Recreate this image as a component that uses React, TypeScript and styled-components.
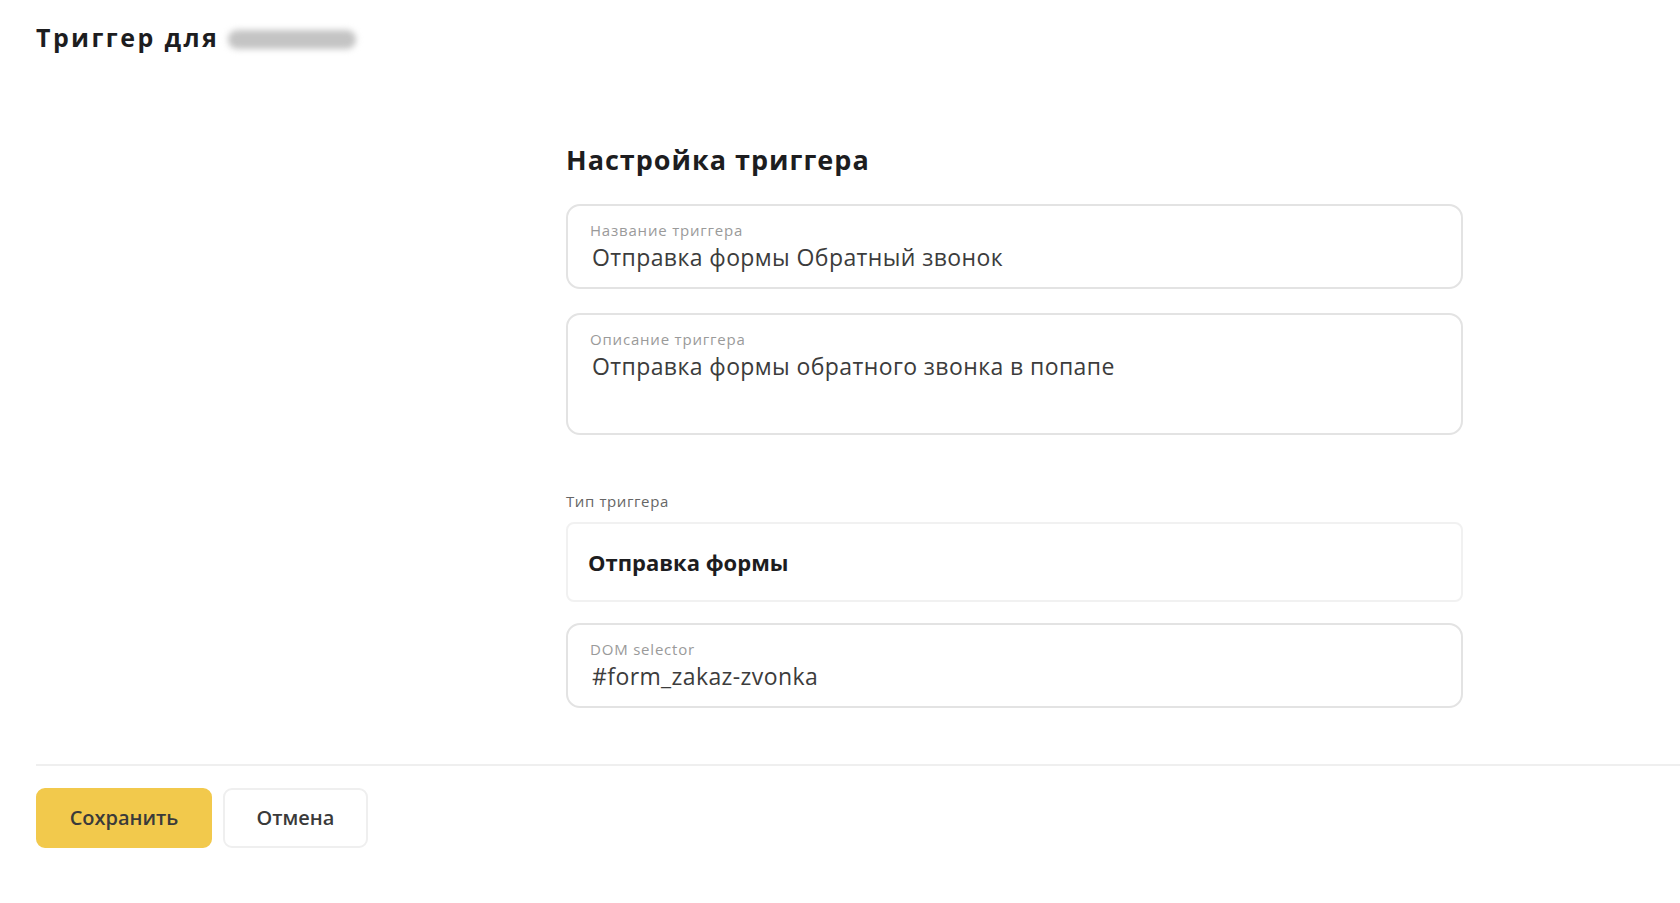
import React from 'react';
import styled, { createGlobalStyle } from 'styled-components';

const GlobalStyle = createGlobalStyle`
  html, body {
    margin: 0;
    padding: 0;
    background: #fff;
  }
  body {
    font-family: "Open Sans", "Noto Sans", Arial, sans-serif;
    color: #222;
  }
`;

const Page = styled.div`
  padding-left: 36px;
  min-height: 903px;
  box-sizing: border-box;
`;

const Header = styled.header`
  display: flex;
  align-items: center;
  gap: 9px;
  padding-top: 19px;
  height: 36px;
`;

const PageTitle = styled.h1`
  margin: 0;
  font-size: 25px;
  font-weight: 700;
  letter-spacing: 2.4px;
  color: #1d1d1f;
  line-height: 36px;
`;

// name of the site, kept hidden behind a blur
const HiddenName = styled.span`
  display: inline-block;
  width: 128px;
  height: 19px;
  margin-top: 4px;
  border-radius: 9px;
  background: #c4c4c4;
  filter: blur(3px);
`;

const Form = styled.section`
  margin-left: 530px;
  width: 897px;
  padding-top: 87px;
`;

const SectionTitle = styled.h2`
  margin: 0 0 26px;
  font-size: 27px;
  font-weight: 700;
  letter-spacing: 1px;
  color: #1d1d1f;
  line-height: 36px;
`;

const FieldBox = styled.div<{ $tall?: boolean }>`
  box-sizing: border-box;
  height: ${({ $tall }) => ($tall ? '122px' : '85px')};
  border: 2px solid #e3e3e3;
  border-radius: 14px;
  padding: 14px 22px 0;
  margin-bottom: 24px;
  background: #fff;
`;

const FieldLabel = styled.div`
  font-size: 15px;
  line-height: 20px;
  letter-spacing: 0.8px;
  color: #9a9a9a;
`;

const FieldValue = styled.div`
  font-size: 23px;
  line-height: 30px;
  letter-spacing: 0.4px;
  color: #3c3c3c;
  padding: 2px 0 0 2px;
`;

const GroupLabel = styled.div`
  margin-top: 56px;
  font-size: 15px;
  line-height: 20px;
  letter-spacing: 0.6px;
  color: #666;
`;

const SelectBox = styled.div`
  box-sizing: border-box;
  height: 80px;
  margin: 11px 0 21px;
  border: 2px solid #f1f1f1;
  border-radius: 8px;
  padding: 0 20px;
  display: flex;
  align-items: center;
  font-size: 22px;
  font-weight: 700;
  color: #1d1d1f;
`;

const Footer = styled.footer`
  margin-top: 56px;
  border-top: 2px solid #efefef;
  padding-top: 22px;
  display: flex;
  gap: 11px;
`;

const Button = styled.button<{ $primary?: boolean }>`
  box-sizing: border-box;
  height: 60px;
  padding: 0 30px 2px;
  min-width: ${({ $primary }) => ($primary ? '176px' : '145px')};
  border-radius: 9px;
  border: 2px solid ${({ $primary }) => ($primary ? '#f2c94c' : '#efefef')};
  background: ${({ $primary }) => ($primary ? '#f2c94c' : '#fff')};
  font-family: inherit;
  font-size: 20px;
  font-weight: 600;
  color: #3a3a3a;
  cursor: pointer;
`;

const App: React.FC = () => {
  return (
    <>
      <GlobalStyle />
      <Page>
        <Header>
          <PageTitle>Триггер для</PageTitle>
          <HiddenName />
        </Header>

        <Form>
          <SectionTitle>Настройка триггера</SectionTitle>

          <FieldBox>
            <FieldLabel>Название триггера</FieldLabel>
            <FieldValue>Отправка формы Обратный звонок</FieldValue>
          </FieldBox>

          <FieldBox $tall>
            <FieldLabel>Описание триггера</FieldLabel>
            <FieldValue>Отправка формы обратного звонка в попапе</FieldValue>
          </FieldBox>

          <GroupLabel>Тип триггера</GroupLabel>
          <SelectBox>Отправка формы</SelectBox>

          <FieldBox>
            <FieldLabel>DOM selector</FieldLabel>
            <FieldValue>#form_zakaz-zvonka</FieldValue>
          </FieldBox>
        </Form>

        <Footer>
          <Button $primary>Сохранить</Button>
          <Button>Отмена</Button>
        </Footer>
      </Page>
    </>
  );
};

export default App;
